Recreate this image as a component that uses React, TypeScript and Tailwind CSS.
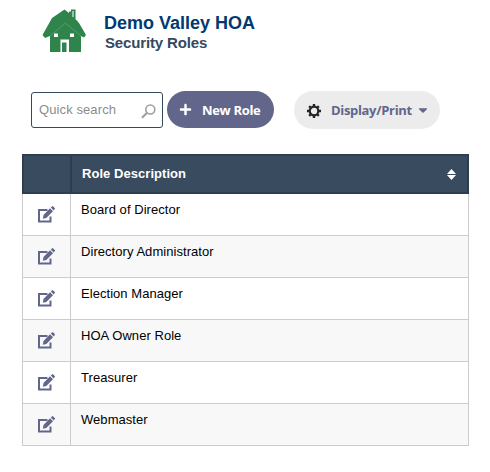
import React from 'react';
import { FaCaretDown, FaPlus } from 'react-icons/fa';

const roles = [
    'Board of Director',
    'Directory Administrator',
    'Election Manager',
    'HOA Owner Role',
    'Treasurer',
    'Webmaster',
];

const HouseLogo: React.FC = () => (
    <svg width="46" height="45" viewBox="0 0 46 45" className="shrink-0">
        <path
            fill="#2e844a"
            d="M22.5 1.5 27 5V3.5h2V1.5h4.5V11L37 15l7 12-2 2.5-3-1.5v16H8V28l-5 2-2.5-3L10 10Z"
        />
        <path fill="#fff" d="M30.5 3h1v6h-1z" />
        <path fill="none" stroke="#fff" strokeWidth="0.6" d="M8 28 23.5 15 39 28" opacity="0.3" />
        <path fill="#fff" d="M12 25.5h4v3.5h-4zM28 25.5h4v3.5h-4zM18.500 31.500h8.500V44h-8.500z" />
        <path fill="#2e844a" d="M20 34.500h4.500V44H20z" />
    </svg>
);

const SearchIcon: React.FC = () => (
    <svg width="15" height="15" viewBox="0 0 15 15" fill="none" stroke="#a0a0a0" className="relative top-px shrink-0">
        <circle cx="9.300" cy="5.500" r="4.500" strokeWidth="1.600" />
        <path d="M5.800 9 1 13.800" strokeWidth="2.200" />
    </svg>
);

const GearIcon: React.FC = () => (
    <svg width="14" height="14" viewBox="0 0 14 14" fill="none" stroke="#222" className="relative top-px shrink-0">
        <circle cx="7" cy="7" r="4.300" strokeWidth="2.200" />
        <path
            strokeWidth="2.400"
            d="M7 0v2M7 12v2M0 7h2M12 7h2M2.200 2.200l1.300 1.300M10.500 10.500l1.300 1.300M2.200 11.800l1.300-1.300M10.500 3.500l1.300-1.300"
        />
    </svg>
);

const EditIcon: React.FC = () => (
    <svg width="17" height="17" viewBox="0 0 17 17" className="shrink-0">
        <path fill="none" stroke="#62668b" strokeWidth="2" d="M9.500 4H1v11.500h11.500V10.500" />
        <path fill="#62668b" d="m12 2.300 3 3L8.300 12 4.800 12.700l.7-3.700ZM12.800 1.500 14 .400q.6-.6 1.200 0l1.500 1.500q.6.600 0 1.200l-1 1.300Z" />
    </svg>
);

const SortIcon: React.FC = () => (
    <svg width="9" height="11" viewBox="0 0 9 11" fill="#fff" className="shrink-0">
        <path d="M4.5 0 9 5H0ZM0 6h9l-4.500 5Z" />
    </svg>
);

export default function App() {
    return (
        <div className="w-[490px] h-[472px] bg-white overflow-hidden font-['Liberation_Sans',Arial,sans-serif]">
            {/* Association name and page title */}
            <header className="flex h-[91px] pl-[42px] pt-2 gap-4">
                <HouseLogo />
                <div className="pt-1">
                    <h1 className="text-[18px] leading-[22px] font-bold text-[#003a70]">Demo Valley HOA</h1>
                    <h2 className="pl-px text-[15px] leading-[18px] tracking-[-0.14px] font-bold text-[#34495e]">Security Roles</h2>
                </div>
            </header>

            {/* Toolbar */}
            <div className="flex items-start h-[63px] pl-[31px] font-['Open_Sans','Noto_Sans',sans-serif] text-[13px] font-bold">
                <div className="flex items-center justify-between mt-px w-[132px] h-9 pl-[7px] pr-[6px] border border-[#34495e] rounded-[3px]">
                    <span className="font-['Liberation_Sans',Arial,sans-serif] font-normal text-[#8c8c8c] tracking-[0.1px]">Quick search</span>
                    <SearchIcon />
                </div>
                <button className="flex items-center ml-1 w-[107px] h-[37px] pl-3 rounded-full bg-[#62668b] text-white">
                    <FaPlus className="shrink-0 mr-[10px]" size={13} />
                    <span className="pt-0.5 whitespace-nowrap tracking-[-0.33px]">New Role</span>
                </button>
                <button className="flex items-center ml-5 w-[146px] h-[38px] pl-[13px] rounded-full bg-[#ececec] text-[#62668b]">
                    <GearIcon />
                    <span className="ml-[10px] mr-1 pt-px tracking-[-0.33px]">Display/Print</span>
                    <FaCaretDown className="shrink-0" size={14} />
                </button>
            </div>

            {/* Roles table */}
            <div className="ml-[22px] w-[447px] text-[13px]">
                <div className="flex h-10 border-2 border-[#2c3e50] bg-[#384b5f] text-white font-bold">
                    <div className="w-12 border-r-2 border-[#2c3e50]" />
                    <div className="flex flex-1 items-center justify-between pl-[10px] pr-[11px]">
                        <span className="tracking-[0.05px]">Role Description</span>
                        <SortIcon />
                    </div>
                </div>
                {roles.map((role) => (
                    <div key={role} className="flex h-[42px] border-x border-b border-[#ccc] even:bg-white odd:bg-[#f8f8f8] text-black">
                        <div className="flex w-12 items-center justify-center border-r border-[#ccc]">
                            <EditIcon />
                        </div>
                        <div className="pl-[10px] pt-2 leading-[16px] tracking-[0.05px]">{role}</div>
                    </div>
                ))}
            </div>
        </div>
    );
}
